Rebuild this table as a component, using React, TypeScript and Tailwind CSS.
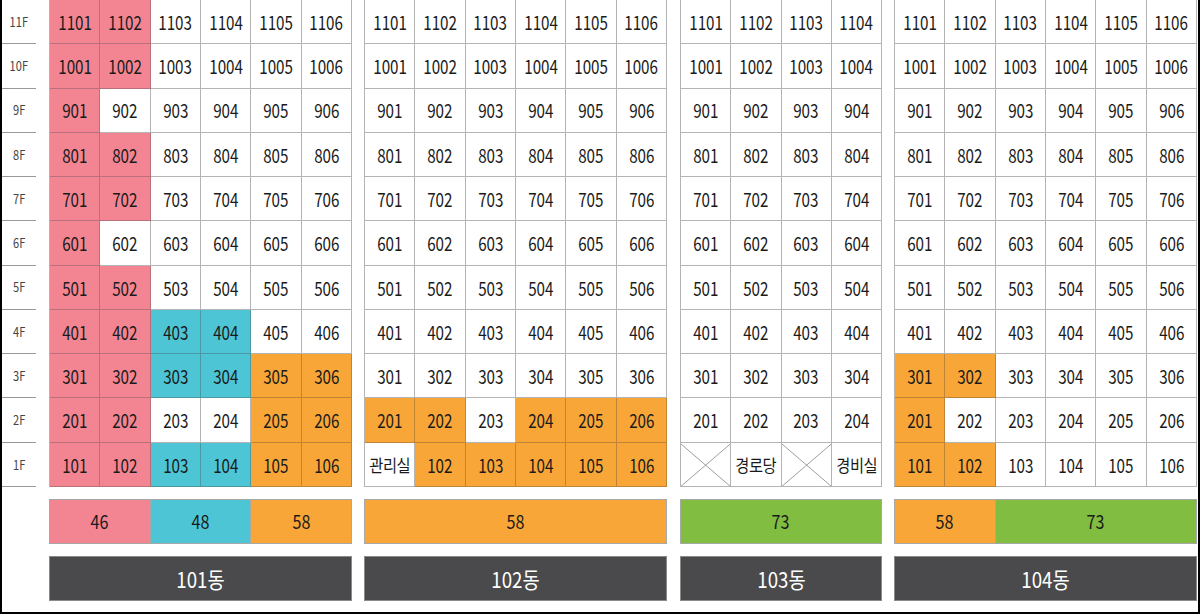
const FONT = '"Noto Sans CJK KR", "Noto Sans", sans-serif';

type Code = 'w' | 'p' | 'c' | 'o' | 'x';

const cellStyle: Record<Code, string> = {
  w: 'bg-white border-[#b4b4b4]',
  x: 'bg-white border-[#b4b4b4]',
  p: 'bg-[#f38593] border-[#b9707a]',
  c: 'bg-[#4dc5d4] border-[#4a9aa4]',
  o: 'bg-[#f9a638] border-[#c08436]',
};

const buildings = [
  {
    name: '101동',
    cols: 6,
    rows: ['ppwwww', 'ppwwww', 'pwwwww', 'ppwwww', 'ppwwww', 'pwwwww', 'ppwwww', 'ppccww', 'ppccoo', 'ppwwoo', 'ppccoo'],
    labels: {} as Record<string, string>,
    areas: [
      { v: '46', span: 2, bg: 'bg-[#f38593]' },
      { v: '48', span: 2, bg: 'bg-[#4dc5d4]' },
      { v: '58', span: 2, bg: 'bg-[#f9a638]' },
    ],
  },
  {
    name: '102동',
    cols: 6,
    rows: ['wwwwww', 'wwwwww', 'wwwwww', 'wwwwww', 'wwwwww', 'wwwwww', 'wwwwww', 'wwwwww', 'wwwwww', 'oowooo', 'wooooo'],
    labels: { '1-1': '관리실' } as Record<string, string>,
    areas: [{ v: '58', span: 6, bg: 'bg-[#f9a638]' }],
  },
  {
    name: '103동',
    cols: 4,
    rows: ['wwww', 'wwww', 'wwww', 'wwww', 'wwww', 'wwww', 'wwww', 'wwww', 'wwww', 'wwww', 'xwxw'],
    labels: { '1-2': '경로당', '1-4': '경비실' } as Record<string, string>,
    areas: [{ v: '73', span: 4, bg: 'bg-[#80bd41]' }],
  },
  {
    name: '104동',
    cols: 6,
    rows: ['wwwwww', 'wwwwww', 'wwwwww', 'wwwwww', 'wwwwww', 'wwwwww', 'wwwwww', 'wwwwww', 'oowwww', 'owwwww', 'oowwww'],
    labels: {} as Record<string, string>,
    areas: [
      { v: '58', span: 2, bg: 'bg-[#f9a638]' },
      { v: '73', span: 4, bg: 'bg-[#80bd41]' },
    ],
  },
];

const floors = [11, 10, 9, 8, 7, 6, 5, 4, 3, 2, 1];

function Cross() {
  return (
    <svg className="h-full w-full" viewBox="0 0 50 44" preserveAspectRatio="none">
      <line x1="0" y1="0" x2="50" y2="44" stroke="#9a9a9a" strokeWidth="1" />
      <line x1="50" y1="0" x2="0" y2="44" stroke="#9a9a9a" strokeWidth="1" />
    </svg>
  );
}

function Building({ b }: { b: (typeof buildings)[number] }) {
  const width = b.cols === 6 ? 'w-[303px]' : 'w-[202px]';
  const gridCols = b.cols === 6 ? 'grid-cols-6' : 'grid-cols-4';
  return (
    <div className={`flex flex-col ${width}`}>
      <div className={`grid ${gridCols} grid-rows-11 h-[487px] border-l border-[#b4b4b4]`}>
        {b.rows.map((row, ri) =>
          row.split('').map((code, ci) => {
            const fl = floors[ri];
            const label = b.labels[`${fl}-${ci + 1}`];
            const c = code as Code;
            return (
              <div
                key={`${ri}-${ci}`}
                className={`flex items-center justify-center overflow-hidden border-r border-b pt-px text-[#1a1a1a] ${cellStyle[c]}`}
              >
                {c === 'x' ? (
                  <Cross />
                ) : label ? (
                  <span className="inline-block scale-x-[0.9] whitespace-nowrap text-[17px] tracking-[-0.5px]">{label}</span>
                ) : (
                  <span className="inline-block scale-x-[0.8] whitespace-nowrap text-[19px]">{fl * 100 + ci + 1}</span>
                )}
              </div>
            );
          })
        )}
      </div>
      <div className="mt-[12px] flex h-[45px] border border-[#a8a8a8]">
        {b.areas.map((a, i) => (
          <div
            key={i}
            className={`flex items-center justify-center text-[#1a1a1a] ${a.bg} ${i > 0 ? 'border-l border-[#a8a8a8]' : ''}`}
            style={{ flex: a.span }}
          >
            <span className="inline-block scale-x-[0.85] text-[19px]">{a.v}</span>
          </div>
        ))}
      </div>
      <div className="mt-[12px] flex h-[45px] items-center justify-center bg-[#4a4a4c] border border-[#8a8a8a] text-white">
        <span className="inline-block scale-x-[0.85] whitespace-nowrap text-[22px]">{b.name}</span>
      </div>
    </div>
  );
}

export default function App() {
  return (
    <div
      className="flex h-[614px] w-[1200px] border-l-2 border-r-2 border-b-2 border-black bg-white"
      style={{ fontFamily: FONT }}
    >
      <div className="flex w-[34px] flex-col">
        {floors.map((f) => (
          <div
            key={f}
            className="flex h-[44.27px] items-center justify-center border-b border-[#999] text-[#444]"
          >
            <span className="inline-block scale-x-[0.85] text-[13px]">{f}F</span>
          </div>
        ))}
      </div>
      <div className="ml-[13px] flex">
        <Building b={buildings[0]} />
        <div className="ml-[12px]">
          <Building b={buildings[1]} />
        </div>
        <div className="ml-[13px]">
          <Building b={buildings[2]} />
        </div>
        <div className="ml-[12px]">
          <Building b={buildings[3]} />
        </div>
      </div>
    </div>
  );
}
